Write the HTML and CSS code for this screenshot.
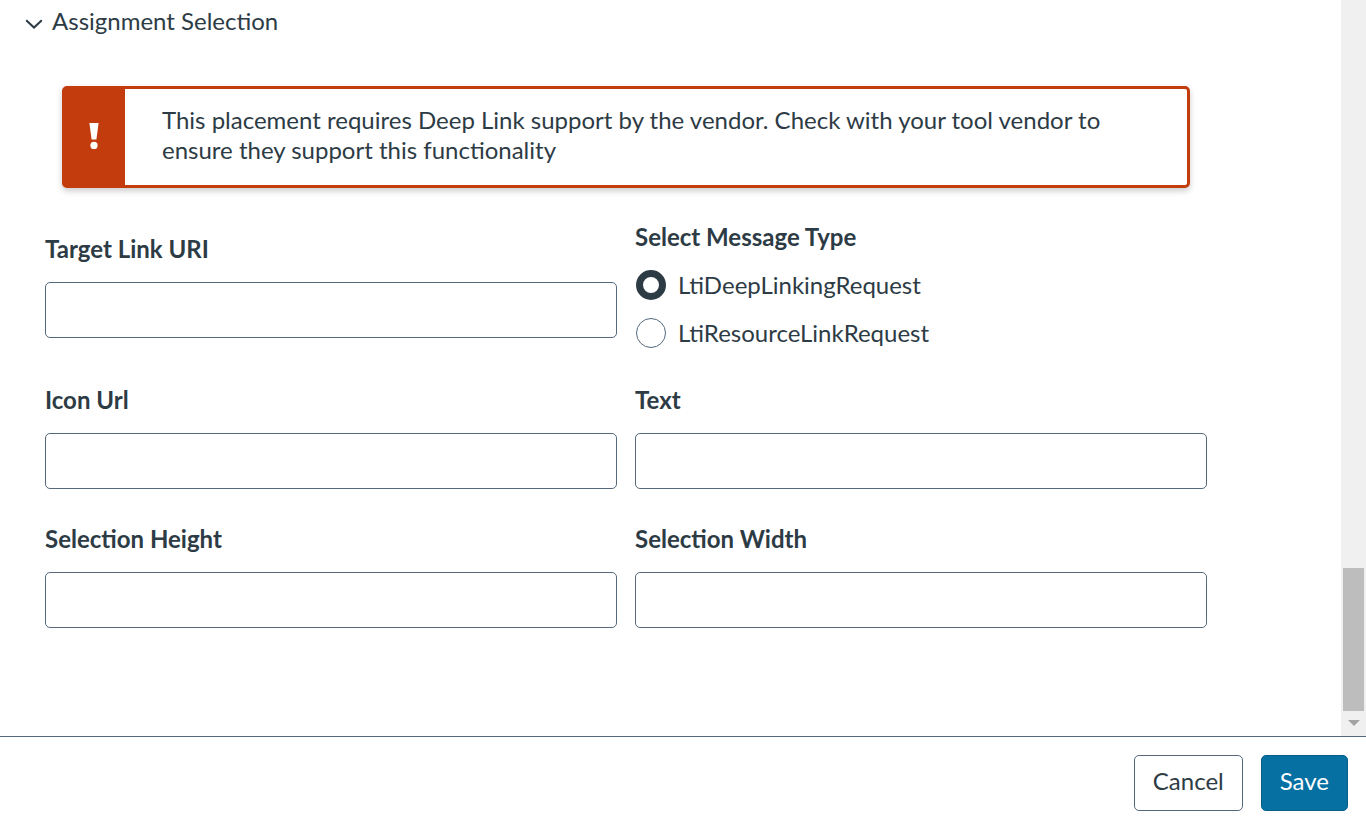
FILE: index.html
```html
<!DOCTYPE html>
<html lang="en">
<head>
  <meta charset="UTF-8" />
  <title>Assignment Selection</title>
  <link rel="stylesheet" href="styles.css">
</head>
<body>
  <div class="body-row">
    <main class="content">
      <div class="toggle">
        <svg class="chevron" viewBox="0 0 18 10" width="18" height="10" aria-hidden="true">
          <path d="M1.2 1.2 L9 8.6 L16.8 1.2" fill="none" stroke="#2d3b45" stroke-width="2"/>
        </svg>
        <span>Assignment Selection</span>
      </div>

      <div class="alert">
        <div class="alert-icon">
          <svg viewBox="0 0 10 28" width="10" height="28" aria-hidden="true">
            <path d="M0.4 1 H9.6 L7.4 17.6 H2.6 Z" fill="#fff"/>
            <circle cx="5" cy="23.4" r="3.6" fill="#fff"/>
          </svg>
        </div>
        <p>This placement requires Deep Link support by the vendor. Check with your tool vendor to ensure they support this functionality</p>
      </div>

      <div class="fields">
        <div class="field">
          <label>Target Link URI</label>
          <input type="text" />
        </div>
        <div class="field">
          <div class="group-title">Select Message Type</div>
          <div class="radio-row">
            <span class="radio checked"></span>
            <span>LtiDeepLinkingRequest</span>
          </div>
          <div class="radio-row">
            <span class="radio"></span>
            <span>LtiResourceLinkRequest</span>
          </div>
        </div>
        <div class="field">
          <label>Icon Url</label>
          <input type="text" />
        </div>
        <div class="field">
          <label>Text</label>
          <input type="text" />
        </div>
        <div class="field">
          <label>Selection Height</label>
          <input type="text" />
        </div>
        <div class="field">
          <label>Selection Width</label>
          <input type="text" />
        </div>
      </div>
    </main>

    <div class="scrollbar">
      <div class="thumb"></div>
      <div class="arrow"></div>
    </div>
  </div>

  <footer class="footer">
    <button class="btn">Cancel</button>
    <button class="btn primary">Save</button>
  </footer>
</body>
</html>
```

FILE: styles.css
```css
html, body {
  height: 100%;
}
body {
  margin: 0;
  display: flex;
  flex-direction: column;
  overflow: hidden;
  font-family: Lato, "Noto Sans", sans-serif;
  font-size: 24px;
  color: #2d3b45;
  background: #fff;
}
.body-row {
  display: flex;
  height: 736px;
}
.content {
  flex: 1;
  padding: 0 134px 0 45px;
}

/* toggle */
.toggle {
  display: flex;
  align-items: center;
  gap: 9px;
  height: 42px;
  margin-left: -20px;
  line-height: 42px;
}
.chevron {
  margin-top: 5px;
}

/* alert */
.alert {
  display: flex;
  box-sizing: border-box;
  width: 1128px;
  height: 102px;
  margin: 44px 0 0 17px;
  border: 3px solid #c23c0d;
  border-radius: 5px;
  background: #fff;
  box-shadow: 0 3px 6px rgba(0,0,0,0.2);
}
.alert-icon {
  flex: none;
  display: flex;
  align-items: center;
  justify-content: center;
  width: 60px;
  background: #c23c0d;
  padding: 0 2px 2px 0;
  box-sizing: border-box;
}
.alert p {
  margin: 0;
  padding: 16px 70px 0 37px;
  line-height: 30px;
}

/* form */
.fields {
  display: grid;
  grid-template-columns: 572px 572px;
  column-gap: 18px;
  row-gap: 35px;
  align-items: end;
  margin-top: 34px;
}
.field label,
.group-title {
  display: block;
  font-weight: 700;
  line-height: 30px;
  margin-bottom: 18px;
}
.field:first-child {
  align-self: start;
  margin-top: 12px;
}
.group-title {
  margin-bottom: 16px;
}
.field input {
  display: block;
  box-sizing: border-box;
  width: 100%;
  height: 56px;
  border: 1px solid #56697a;
  border-radius: 5px;
  background: #fff;
}
.radio-row {
  display: flex;
  align-items: center;
  gap: 12px;
  height: 32px;
  margin-bottom: 16px;
}
.radio-row:last-child {
  margin-bottom: 2px;
}
.radio {
  box-sizing: border-box;
  width: 30px;
  height: 30px;
  margin: 2px 0 0 1px;
  border: 1px solid #56697a;
  border-radius: 50%;
  background: #fff;
}
.radio.checked {
  border: 7px solid #2d3b45;
}

/* fake scrollbar */
.scrollbar {
  position: relative;
  width: 25px;
  background: #f0f0f0;
}
.thumb {
  position: absolute;
  top: 568px;
  left: 2px;
  width: 21px;
  height: 143px;
  background: #bdbdbd;
}
.arrow {
  position: absolute;
  top: 720px;
  left: 7px;
  border-left: 6px solid transparent;
  border-right: 6px solid transparent;
  border-top: 6px solid #a3a3a3;
}

/* footer */
.footer {
  flex: 1;
  display: flex;
  justify-content: flex-end;
  align-items: flex-start;
  gap: 18px;
  padding: 18px 18px 0 0;
  border-top: 1px solid #56697a;
}
.btn {
  box-sizing: border-box;
  height: 56px;
  padding: 0 18px 5px;
  font: inherit;
  color: #2d3b45;
  background: #fff;
  border: 1px solid #56697a;
  border-radius: 5px;
}
.btn.primary {
  color: #fff;
  background: #0770a3;
  border-color: #065d88;
}
```
